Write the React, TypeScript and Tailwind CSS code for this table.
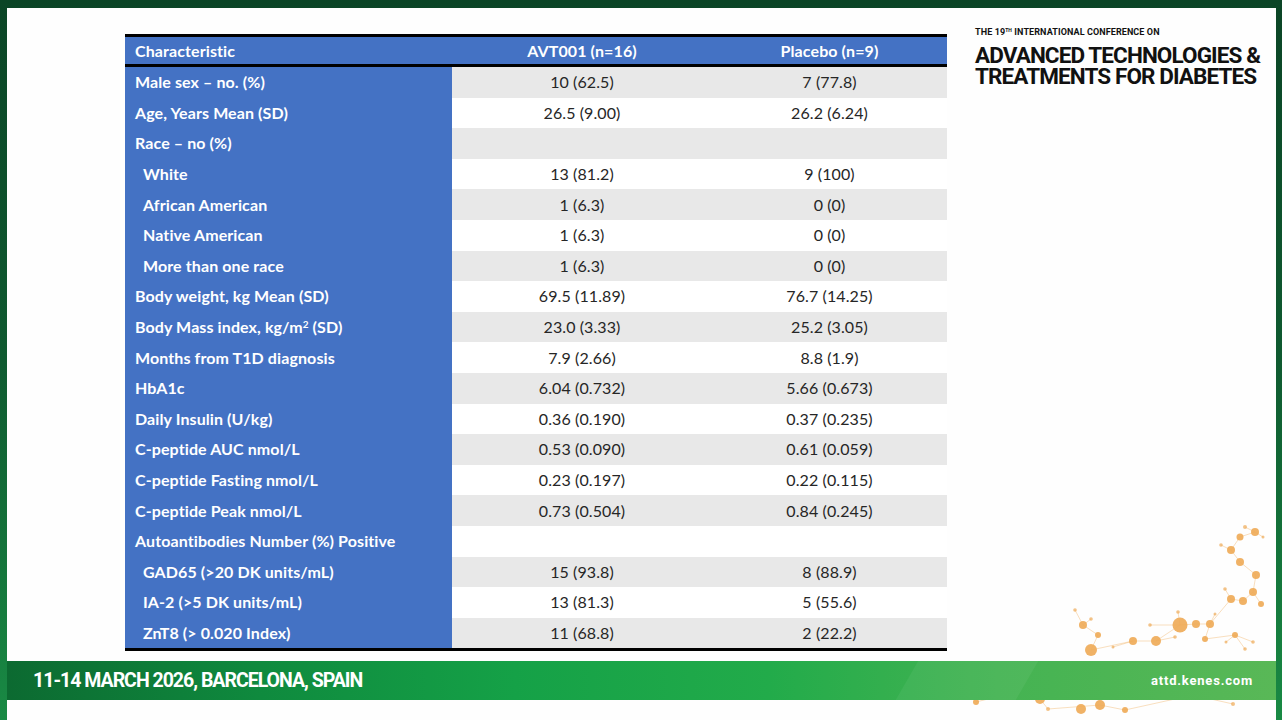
import React from 'react';

type Row = { label: React.ReactNode; a: string; b: string; indent?: boolean };

const ROWS: Row[] = [
  { label: 'Male sex – no. (%)', a: '10 (62.5)', b: '7 (77.8)' },
  { label: 'Age, Years Mean (SD)', a: '26.5 (9.00)', b: '26.2 (6.24)' },
  { label: 'Race – no (%)', a: '', b: '' },
  { label: 'White', a: '13 (81.2)', b: '9 (100)', indent: true },
  { label: 'African American', a: '1 (6.3)', b: '0 (0)', indent: true },
  { label: 'Native American', a: '1 (6.3)', b: '0 (0)', indent: true },
  { label: 'More than one race', a: '1 (6.3)', b: '0 (0)', indent: true },
  { label: 'Body weight, kg Mean (SD)', a: '69.5 (11.89)', b: '76.7 (14.25)' },
  {
    label: (
      <>
        Body Mass index, kg/m<sup className="text-[10px] -top-[5px]">2</sup> (SD)
      </>
    ),
    a: '23.0 (3.33)',
    b: '25.2 (3.05)',
  },
  { label: 'Months from T1D diagnosis', a: '7.9 (2.66)', b: '8.8 (1.9)' },
  { label: 'HbA1c', a: '6.04 (0.732)', b: '5.66 (0.673)' },
  { label: 'Daily Insulin (U/kg)', a: '0.36 (0.190)', b: '0.37 (0.235)' },
  { label: 'C-peptide AUC nmol/L', a: '0.53 (0.090)', b: '0.61 (0.059)' },
  { label: 'C-peptide Fasting nmol/L', a: '0.23 (0.197)', b: '0.22 (0.115)' },
  { label: 'C-peptide Peak nmol/L', a: '0.73 (0.504)', b: '0.84 (0.245)' },
  { label: 'Autoantibodies Number (%) Positive', a: '', b: '' },
  { label: 'GAD65 (>20 DK units/mL)', a: '15 (93.8)', b: '8 (88.9)', indent: true },
  { label: 'IA-2 (>5 DK units/mL)', a: '13 (81.3)', b: '5 (55.6)', indent: true },
  { label: 'ZnT8 (> 0.020 Index)', a: '11 (68.8)', b: '2 (22.2)', indent: true },
];

// network decoration, page coordinates
const NODES: [number, number, number][] = [
  [1262, 540, 4], [1252, 535, 2], [1247, 545, 3.5], [1238, 558, 4], [1228, 553, 1.8],
  [1247, 570, 4], [1263, 583, 4], [1260, 600, 4], [1250, 609, 4], [1238, 607, 4],
  [1232, 597, 1.8], [1268, 612, 3], [1187, 633, 7.5], [1203, 632, 4], [1217, 632, 4],
  [1212, 647, 3], [1242, 643, 3], [1252, 657, 1.8], [1260, 650, 1.8], [1163, 649, 5],
  [1140, 649, 4], [1098, 658, 6], [1090, 633, 4], [1082, 618, 1.8], [1105, 643, 3],
  [1098, 627, 1.8], [1157, 633, 1.8], [1185, 620, 1.8], [1182, 645, 1.8],
  [983, 710, 3], [1015, 702, 4], [1047, 707, 5], [1067, 700, 2], [1088, 717, 5],
  [1107, 713, 5], [1132, 718, 3], [1200, 703, 3], [1055, 717, 2], [1240, 712, 2],
  [1270, 545, 1.5], [1222, 622, 1.5], [1233, 650, 1.5], [1120, 655, 1.5],
];

const LINKS: [number, number][] = [
  [0, 1], [0, 2], [2, 3], [3, 4], [3, 5], [5, 6], [6, 7], [7, 8], [8, 9], [9, 10], [7, 11],
  [12, 13], [13, 14], [14, 9], [12, 26], [12, 27], [12, 19], [19, 20], [20, 21], [21, 24],
  [24, 22], [22, 23], [22, 25], [14, 15], [15, 16], [16, 17], [16, 18], [19, 28],
  [29, 30], [30, 31], [31, 32], [31, 37], [37, 34], [34, 35], [35, 36], [36, 38],
  [0, 39], [14, 40], [16, 41], [20, 42],
];

const Network: React.FC = () => (
  <svg className="absolute right-0 bottom-0" width="320" height="200" viewBox="0 0 320 200">
    <g transform="translate(-963,-528)">
      {LINKS.map(([i, j], k) => (
        <line
          key={k}
          x1={NODES[i][0]}
          y1={NODES[i][1]}
          x2={NODES[j][0]}
          y2={NODES[j][1]}
          stroke="#f0b060"
          strokeOpacity="0.5"
          strokeWidth="0.8"
        />
      ))}
      {NODES.map(([x, y, r], k) => (
        <circle key={k} cx={x} cy={y} r={r} fill="#eeaa55" fillOpacity={r < 2.5 ? 0.7 : 0.9} />
      ))}
    </g>
  </svg>
);

const App: React.FC = () => {
  return (
    <div className="w-[1282px] h-[720px] overflow-hidden pt-[8px] pl-[7px] pr-[6px] bg-[linear-gradient(180deg,#0b4526_0%,#0f5a30_50%,#198a44_100%)]">
      <div className="relative w-[1269px] h-[712px] bg-[#fefefe] flex flex-col">
        <Network />

        <div className="relative h-[653px] flex items-start pl-[118px] pt-[26px]">
          {/* Table */}
          <div className="w-[822px] font-['Lato','Liberation_Sans',sans-serif] text-[16px] tracking-[0.1px] border-t-[3px] border-b-[3px] border-black">
            <div className="flex h-[27px] items-center bg-[#4472c4] text-white font-bold border-b-[3px] border-black box-content">
              <div className="w-[327px] pl-[10px]">Characteristic</div>
              <div className="w-[260px] text-center">AVT001 (n=16)</div>
              <div className="w-[235px] text-center">Placebo (n=9)</div>
            </div>
            {ROWS.map((r, i) => (
              <div
                key={i}
                className={`flex h-[30.6px] items-center ${i % 2 === 0 ? 'bg-[#e8e8e8]' : 'bg-white'}`}
              >
                <div
                  className={`w-[327px] h-full flex items-center bg-[#4472c4] text-white font-bold ${
                    r.indent ? 'pl-[18px]' : 'pl-[10px]'
                  }`}
                >
                  <span>{r.label}</span>
                </div>
                <div className="w-[260px] text-center text-[#262626]">{r.a}</div>
                <div className="w-[235px] text-center text-[#262626]">{r.b}</div>
              </div>
            ))}
          </div>

          {/* Conference logo */}
          <div className="ml-[28px] mt-[-7.5px] font-['Roboto',sans-serif] font-bold text-[#111]">
            <div className="text-[9px] leading-[10px] tracking-[0.1px]">
              THE 19<sup className="text-[5px] -top-[3px]">TH</sup> INTERNATIONAL CONFERENCE ON
            </div>
            <div className="mt-[8px] text-[22.5px] leading-[21.5px] tracking-[-0.9px]">
              <div>ADVANCED TECHNOLOGIES &amp;</div>
              <div>TREATMENTS FOR DIABETES</div>
            </div>
          </div>
        </div>

        {/* Bottom band */}
        <div className="relative h-[39px] flex items-center justify-between pl-[26px] pr-[23px] bg-[linear-gradient(90deg,#0c6a31_0%,#0f8a3e_20%,#15a147_40%,#22ab4a_60%,#44b352_78%,#59b857_100%)] font-['Roboto',sans-serif] font-bold text-white">
          <div className="absolute inset-y-0 left-[900px] w-[120px] skew-x-[-30deg] bg-white/5" />
          <span className="relative text-[19.5px] tracking-[-1px]">11-14 MARCH 2026, BARCELONA, SPAIN</span>
          <span className="relative text-[13px] tracking-[0.8px]">attd.kenes.com</span>
        </div>
        <div className="flex-1" />
      </div>
    </div>
  );
};

export default App;
